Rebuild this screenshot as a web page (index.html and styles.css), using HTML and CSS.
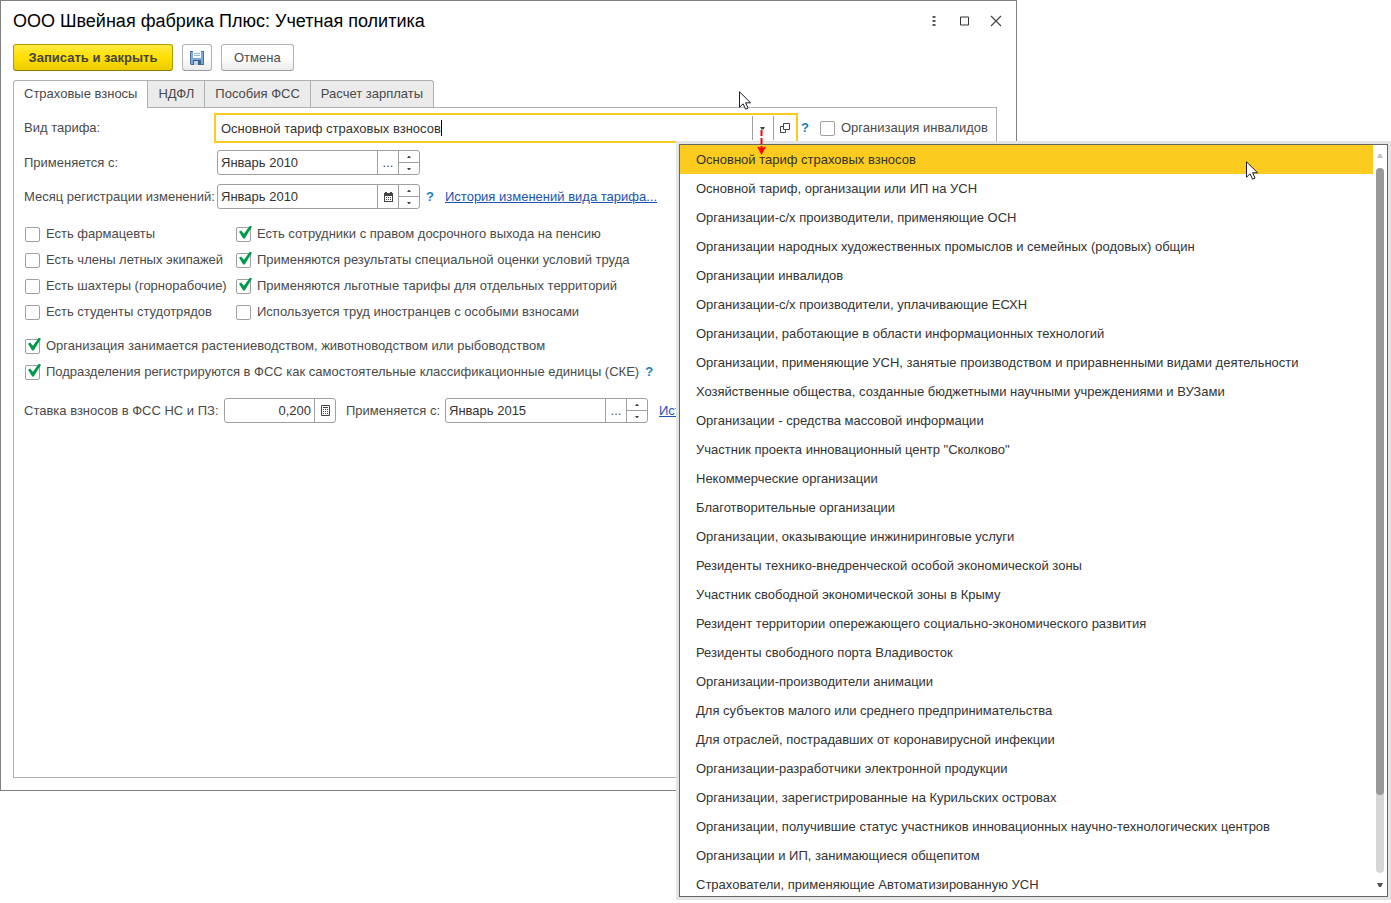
FILE: index.html
```html
<!DOCTYPE html>
<html lang="ru">
<head>
<meta charset="utf-8">
<title>ООО Швейная фабрика Плюс: Учетная политика</title>
<link rel="stylesheet" href="styles.css">
</head>
<body>
<main class="window">
  <header class="titlebar">
    <h1 class="title">ООО Швейная фабрика Плюс: Учетная политика</h1>
    <div class="window-controls">
      <button class="icon-button" type="button" aria-label="Меню"><svg width="4" height="12" viewBox="0 0 4 12"><path d="M.5 1h3v2h-3zM.5 5h3v2h-3zM.5 9h3v2h-3z" fill="#5a5a5a"/></svg></button>
      <button class="icon-button" type="button" aria-label="Развернуть"><svg width="10" height="10" viewBox="0 0 10 10"><path d="M.5 1h8v8h-8z" fill="none" stroke="#333"/></svg></button>
      <button class="icon-button" type="button" aria-label="Закрыть"><svg width="12" height="12" viewBox="0 0 12 12"><path d="M1 1l10 10M11 1L1 11" stroke="#444" stroke-width="1.2"/></svg></button>
    </div>
  </header>

  <div class="toolbar">
    <button class="button button-primary" type="button">Записать и закрыть</button>
    <button class="button button-save" type="button" aria-label="Записать"><svg width="14" height="14" viewBox="0 0 14 14"><path d="M0 0h14v14H1L0 13z" fill="#4a74a0"/><path d="M1 1h12v12H1z" fill="#7aa9dc"/><path d="M3 0h8v7H3z" fill="#f7fbff"/><path d="M4 2h6v1H4zM4 4h6v1H4z" fill="#8fb4d8"/><path d="M3 9h8v5H3z" fill="#3c628a"/><path d="M4 10h4v4H4z" fill="#c3d3e2"/></svg></button>
    <button class="button" type="button">Отмена</button>
  </div>

  <div class="tabs" role="tablist">
    <button class="tab tab-active" type="button" role="tab" aria-selected="true">Страховые взносы</button>
    <button class="tab" type="button" role="tab" aria-selected="false">НДФЛ</button>
    <button class="tab" type="button" role="tab" aria-selected="false">Пособия ФСС</button>
    <button class="tab" type="button" role="tab" aria-selected="false">Расчет зарплаты</button>
  </div>

  <section class="panel" role="tabpanel">
    <div class="row row-tariff">
      <label class="label" for="tariff">Вид тарифа:</label>
      <div class="field field-focus">
        <input class="input input-tariff" id="tariff" type="text" value="Основной тариф страховых взносов">
        <span class="caret"></span>
        <button class="field-button push" type="button" aria-label="Выбрать из списка"><svg width="5" height="3" viewBox="0 0 5 3"><path d="M0 0h5L3.500 2.500h-2z" fill="#444"/></svg></button>
        <button class="field-button field-button-open" type="button" aria-label="Открыть"><svg width="10" height="10" viewBox="0 0 10 10"><path d="M3.500.5h6v6h-6zM3.500 3.500h-3v6h5v-3" fill="none" stroke="#444"/></svg></button>
      </div>
      <a class="help" href="#help">?</a>
      <label class="check"><input type="checkbox">Организация инвалидов</label>
    </div>

    <div class="row">
      <label class="label" for="applied">Применяется с:</label>
      <div class="field field-date">
        <input class="input" id="applied" type="text" value="Январь 2010">
        <button class="field-button" type="button">...</button>
        <span class="spinner"><button type="button" aria-label="Больше"><svg width="4" height="2" viewBox="0 0 4 2"><path d="M0 2h4L2.500 0h-1z" fill="#444"/></svg></button><button type="button" aria-label="Меньше"><svg width="4" height="2" viewBox="0 0 4 2"><path d="M0 0h4L2.500 2h-1z" fill="#444"/></svg></button></span>
      </div>
    </div>

    <div class="row row-month">
      <label class="label" for="month">Месяц регистрации изменений:</label>
      <div class="field field-date">
        <input class="input" id="month" type="text" value="Январь 2010">
        <button class="field-button" type="button" aria-label="Календарь"><svg width="9" height="10" viewBox="0 0 9 10"><path d="M0 1h1V0h2v1h3V0h2v1h1v9H0z" fill="#444"/><path d="M1 4h7v5H1z" fill="#fff"/><path d="M2 5h1v1H2zM4 5h1v1H4zM6 5h1v1H6zM2 7h1v1H2zM4 7h1v1H4zM6 7h1v1H6z" fill="#444"/></svg></button>
        <span class="spinner"><button type="button" aria-label="Больше"><svg width="4" height="2" viewBox="0 0 4 2"><path d="M0 2h4L2.500 0h-1z" fill="#444"/></svg></button><button type="button" aria-label="Меньше"><svg width="4" height="2" viewBox="0 0 4 2"><path d="M0 0h4L2.500 2h-1z" fill="#444"/></svg></button></span>
      </div>
      <a class="help" href="#help">?</a>
      <a class="link" href="#history">История изменений вида тарифа...</a>
    </div>

    <div class="checks checks-two">
      <label class="check"><input type="checkbox">Есть фармацевты</label>
      <label class="check"><input type="checkbox" checked>Есть сотрудники с правом досрочного выхода на пенсию</label>
      <label class="check"><input type="checkbox">Есть члены летных экипажей</label>
      <label class="check"><input type="checkbox" checked>Применяются результаты специальной оценки условий труда</label>
      <label class="check"><input type="checkbox">Есть шахтеры (горнорабочие)</label>
      <label class="check"><input type="checkbox" checked>Применяются льготные тарифы для отдельных территорий</label>
      <label class="check"><input type="checkbox">Есть студенты студотрядов</label>
      <label class="check"><input type="checkbox">Используется труд иностранцев с особыми взносами</label>
    </div>

    <div class="checks">
      <label class="check"><input type="checkbox" checked>Организация занимается растениеводством, животноводством или рыбоводством</label>
      <div class="check-line">
        <label class="check"><input type="checkbox" checked>Подразделения регистрируются в ФСС как самостоятельные классификационные единицы (СКЕ)</label>
        <a class="help" href="#help">?</a>
      </div>
    </div>

    <div class="row row-rate">
      <label class="label label-rate" for="rate">Ставка взносов в ФСС НС и ПЗ:</label>
      <div class="field field-rate">
        <input class="input input-number" id="rate" type="text" value="0,200">
        <button class="field-button" type="button" aria-label="Калькулятор"><svg width="9" height="11" viewBox="0 0 9 11"><path d="M.5.5h8v10h-8z" fill="none" stroke="#444"/><path d="M2 2h5v1H2zM2 4h1v1H2zM4 4h1v1H4zM6 4h1v1H6zM2 6h1v1H2zM4 6h1v1H4zM6 6h1v1H6zM2 8h1v1H2zM4 8h1v1H4zM6 8h1v1H6z" fill="#444"/></svg></button>
      </div>
      <label class="label label-since" for="since">Применяется с:</label>
      <div class="field field-date">
        <input class="input" id="since" type="text" value="Январь 2015">
        <button class="field-button" type="button">...</button>
        <span class="spinner"><button type="button" aria-label="Больше"><svg width="4" height="2" viewBox="0 0 4 2"><path d="M0 2h4L2.500 0h-1z" fill="#444"/></svg></button><button type="button" aria-label="Меньше"><svg width="4" height="2" viewBox="0 0 4 2"><path d="M0 0h4L2.500 2h-1z" fill="#444"/></svg></button></span>
      </div>
      <a class="link" href="#rates">История</a>
    </div>
  </section>
</main>

<div class="popup">
  <ul class="options" role="listbox" aria-label="Вид тарифа">
    <li class="option option-selected" role="option" aria-selected="true">Основной тариф страховых взносов</li>
    <li class="option" role="option">Основной тариф, организации или ИП на УСН</li>
    <li class="option" role="option">Организации-с/х производители, применяющие ОСН</li>
    <li class="option" role="option">Организации народных художественных промыслов и семейных (родовых) общин</li>
    <li class="option" role="option">Организации инвалидов</li>
    <li class="option" role="option">Организации-с/х производители, уплачивающие ЕСХН</li>
    <li class="option" role="option">Организации, работающие в области информационных технологий</li>
    <li class="option" role="option">Организации, применяющие УСН, занятые производством и приравненными видами деятельности</li>
    <li class="option" role="option">Хозяйственные общества, созданные бюджетными научными учреждениями и ВУЗами</li>
    <li class="option" role="option">Организации - средства массовой информации</li>
    <li class="option" role="option">Участник проекта инновационный центр "Сколково"</li>
    <li class="option" role="option">Некоммерческие организации</li>
    <li class="option" role="option">Благотворительные организации</li>
    <li class="option" role="option">Организации, оказывающие инжиниринговые услуги</li>
    <li class="option" role="option">Резиденты технико-внедренческой особой экономической зоны</li>
    <li class="option" role="option">Участник свободной экономической зоны в Крыму</li>
    <li class="option" role="option">Резидент территории опережающего социально-экономического развития</li>
    <li class="option" role="option">Резиденты свободного порта Владивосток</li>
    <li class="option" role="option">Организации-производители анимации</li>
    <li class="option" role="option">Для субъектов малого или среднего предпринимательства</li>
    <li class="option" role="option">Для отраслей, пострадавших от коронавирусной инфекции</li>
    <li class="option" role="option">Организации-разработчики электронной продукции</li>
    <li class="option" role="option">Организации, зарегистрированные на Курильских островах</li>
    <li class="option" role="option">Организации, получившие статус участников инновационных научно-технологических центров</li>
    <li class="option" role="option">Организации и ИП, занимающиеся общепитом</li>
    <li class="option" role="option">Страхователи, применяющие Автоматизированную УСН</li>
  </ul>
  <div class="scrollbar">
    <svg width="6" height="4" viewBox="0 0 6 4"><path d="M0 4h6L4 0H2z" fill="#c4c4c4"/></svg>
    <div class="track"><div class="thumb"></div></div>
    <svg width="6" height="4" viewBox="0 0 6 4"><path d="M0 0h6L4 4H2z" fill="#555"/></svg>
  </div>
</div>

<svg class="pointer-arrow" width="9" height="25" viewBox="0 0 9 25"><path d="M3.500 0h2v6h-2zM3.500 8h2v6h-2zM3.500 16h2v2h-2z" fill="#f00"/><path d="M0 16.500l4.500 1.500L9 16.500 4.500 25z" fill="#f00"/></svg>
<svg class="cursor cursor-form" width="13" height="20" viewBox="0 0 13 20"><path d="M.5.800v15.400l3.600-3.400 2.500 5.400 2.500-1.100-2.500-5.300h5z" fill="#fff" stroke="#1b1b2b"/></svg>
<svg class="cursor cursor-list" width="13" height="20" viewBox="0 0 13 20"><path d="M.5.800v15.400l3.600-3.400 2.500 5.400 2.500-1.100-2.500-5.300h5z" fill="#fff" stroke="#1b1b2b"/></svg>
</body>
</html>
```
FILE: styles.css
```css
* { box-sizing: border-box; }

body {
  position: relative;
  display: flex;
  min-height: 100vh;
  margin: 0;
  padding: 0 374px 112px 0;
  background: #fff;
  color: #4a4a4a;
  font: 13px/16px "Liberation Sans", Arial, sans-serif;
}

button, input { font: inherit; color: inherit; }
button { padding: 0; border: 0; background: none; }
svg { display: block; flex: none; }

.window {
  display: flex;
  flex: 1;
  flex-direction: column;
  min-width: 0;
  padding: 7px 19px 12px 12px;
  border: 1px solid #808080;
}

.titlebar { display: flex; align-items: center; justify-content: space-between; height: 26px; }
.title { margin: 0; color: #000; font-size: 18px; font-weight: 400; line-height: 26px; white-space: nowrap; }
.window-controls { display: flex; gap: 11px; margin-right: -9px; }
.icon-button { display: flex; align-items: center; justify-content: center; width: 20px; height: 20px; }

.toolbar { display: flex; gap: 9px; margin-top: 10px; }
.button {
  height: 27px;
  padding: 0 12px;
  border: 1px solid #b3b3b3;
  border-bottom-color: #9c9c9c;
  border-radius: 3px;
  background: linear-gradient(#fff 50%, #ebebeb);
}
.button-primary {
  min-width: 160px;
  border-color: #b39b00;
  border-bottom-color: #8f7d00;
  background: linear-gradient(#ffea45, #ffe000 50%, #ebcb00);
  color: #444;
  font-weight: 700;
}
.button-save { display: flex; align-items: center; justify-content: center; width: 30px; padding: 0; }

.tabs { display: flex; margin-top: 9px; }
.tab {
  height: 27px;
  padding: 0 10px;
  border: 1px solid #b0b0b0;
  border-width: 1px 1px 0 0;
  background: #ebebeb;
}
.tab:last-child { border-top-right-radius: 3px; }
.tab-active {
  height: 28px;
  margin-bottom: -1px;
  padding-bottom: 1px;
  border-left-width: 1px;
  border-radius: 3px 0 0 0;
  background: #fff;
  z-index: 1;
}

.panel { flex: 1; padding: 5px 8px 20px 10px; border: 1px solid #b0b0b0; }
.row { display: flex; align-items: center; margin-top: 7px; white-space: nowrap; }
.row-tariff { margin-top: 0; }
.row-month { margin-top: 9px; }
.row-rate { margin-top: 13px; }
.label { flex: none; width: 193px; }
.row-tariff .label { width: 190px; }
.label-rate { width: 200px; }
.label-since { width: 99px; margin-left: 10px; }

.field { display: flex; flex: none; height: 25px; border: 1px solid #a0a0a0; border-radius: 3px; background: #fff; }
.field-date { width: 203px; }
.field-rate { width: 112px; }
.field-focus { flex: 1; align-items: center; height: 30px; min-width: 0; border: 2px solid #fbcb20; border-radius: 0; }
.input { flex: 1; min-width: 0; height: 100%; padding: 0 3px; border: 0; outline: 0; background: none; color: #333; }
.input-tariff { flex: none; width: 225px; padding: 0 0 0 5px; field-sizing: content; }
.input-number { text-align: right; }
.caret { width: 1px; height: 16px; background: #000; }
.field-button { display: flex; align-items: center; justify-content: center; flex: none; width: 21px; border-left: 1px solid #a0a0a0; }
.field-focus .field-button { height: 24px; }
.field-focus .field-button-open { width: 23px; }
.push { margin-left: auto; }
.spinner { display: flex; flex-direction: column; width: 21px; border-left: 1px solid #a0a0a0; }
.spinner button { display: flex; flex: 1; align-items: center; justify-content: center; }
.spinner button + button { border-top: 1px solid #a0a0a0; }

.help { flex: none; width: 8px; margin-left: 6px; color: #1a7fc0; font-weight: 700; text-decoration: none; }
.row-tariff .help { margin-left: 3px; }
.row-tariff .check { margin-left: 11px; }
.link { margin-left: 11px; color: #1a53b0; text-decoration: underline; }

.checks { display: grid; grid-auto-rows: 26px; margin-top: 8px; padding-left: 1px; white-space: nowrap; }
.checks-two { grid-template-columns: 211px 1fr; margin-top: 12px; }
.check { display: flex; align-items: center; gap: 6px; }
.check-line { display: flex; align-items: center; }
.check input {
  position: relative;
  flex: none;
  width: 15px;
  height: 15px;
  margin: 0;
  border: 1px solid #a0a0a0;
  border-radius: 2px;
  background: #fff;
  appearance: none;
}
.check input:checked::after {
  position: absolute;
  top: -2px;
  left: 2px;
  width: 13px;
  height: 13px;
  background: #009a4d;
  clip-path: polygon(0 48%, 16% 38%, 38% 64%, 84% 0, 100% 10%, 44% 100%, 32% 100%);
  content: "";
}

.popup {
  position: absolute;
  top: 144px;
  right: 3px;
  bottom: 6px;
  left: 679px;
  display: flex;
  border: 1px solid #666;
  box-shadow: 0 0 0 3px #e4e4e4;
  background: #fff;
  color: #333;
}
.options { flex: 1; min-width: 0; margin: 0; padding: 0; overflow: hidden; list-style: none; }
.option { height: 29px; padding-left: 16px; line-height: 29px; white-space: nowrap; }
.option-selected { background: #fbcb20; }
.scrollbar { display: flex; flex: none; flex-direction: column; align-items: center; gap: 10px; width: 14px; padding: 9px 0; }
.track { flex: 1; width: 8px; border-radius: 4px; background: #d6d6d6; }
.thumb { height: 89%; border-radius: 4px; background: #999; }

.pointer-arrow { position: absolute; top: 130px; left: 757px; }
.cursor { position: absolute; }
.cursor-form { top: 91px; left: 739px; }
.cursor-list { top: 161px; left: 1246px; }
```
